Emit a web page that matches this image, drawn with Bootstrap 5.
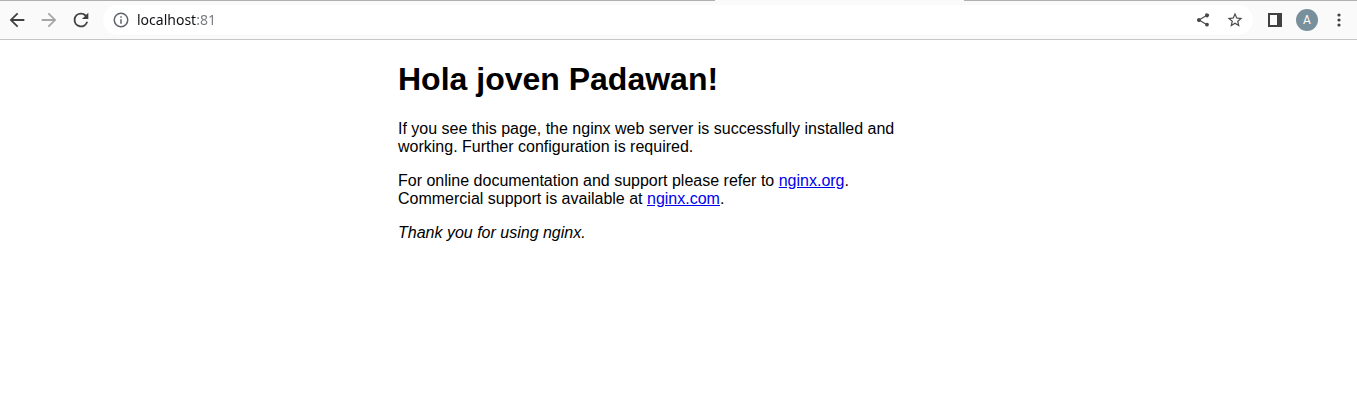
<!DOCTYPE html>
<html lang="en">
<head>
<meta charset="utf-8">
<meta name="viewport" content="width=device-width, initial-scale=1">
<title>localhost:81</title>
<link href="https://cdn.jsdelivr.net/npm/bootstrap@5.3.0/dist/css/bootstrap.min.css" rel="stylesheet">
<style>
  body { font-family: "Liberation Sans", Arial, sans-serif; color: #000; line-height: 18px; }
  .tab-edge { height: 1px; }
  .edge-start { width: 52.7%; background: #b0b0b0; }
  .edge-active { width: 249px; background: #fafafa; }
  .edge-end { background: #b0b0b0; }
  .toolbar { background: #fafafa; border-bottom: 1px solid #c6c6c6; padding: 4px 2px 4px 1px; gap: 6px; }
  .tool { width: 32px; height: 30px; color: #404040; }
  .tool:disabled { color: #a6a6a6; border: 0; opacity: 1; }
  .tool svg { fill: currentColor; }
  .address { background: #fff; height: 30px; padding: 0 2px; }
  .address .tool { color: #5f6368; }
  .address .dark { color: #484848; }
  .url {
    font-family: "Noto Sans", sans-serif; font-size: 14px; line-height: 20px;
    color: #202124; outline: 0;
    background: linear-gradient(90deg, #101114 59px, #75797d 59px);
    -webkit-background-clip: text; background-clip: text;
    -webkit-text-fill-color: transparent;
  }
  .avatar { width: 22px; height: 22px; background: #78909c; color: #fff; font: 400 12px/22px Roboto, sans-serif; }
  .page { max-width: 561px; }
  .page h1 { font-size: 32px; line-height: 37px; margin: 21px 0 22px; }
  .page p { margin-bottom: 16px; }
  .page a { color: #0000ee; }
</style>
</head>
<body>
<header>
  <div class="tab-edge d-flex">
    <div class="edge-start"></div><div class="edge-active"></div><div class="edge-end flex-grow-1"></div>
  </div>
  <nav class="toolbar d-flex align-items-center" aria-label="Browser toolbar">
    <div class="d-flex">
      <button class="tool btn p-0 border-0 d-flex align-items-center justify-content-center" type="button" aria-label="Back">
        <svg width="22" height="22" viewBox="0 0 24 24"><path d="M20 10.9H7.8l5.6-5.5L12 4l-8 8 8 8 1.4-1.4-5.6-5.5H20z"/></svg>
      </button>
      <button class="tool btn p-0 border-0 d-flex align-items-center justify-content-center" type="button" aria-label="Forward" disabled>
        <svg width="22" height="22" viewBox="0 0 24 24"><path d="M4 10.9h12.2l-5.6-5.5L12 4l8 8-8 8-1.4-1.4 5.6-5.5H4z"/></svg>
      </button>
      <button class="tool btn p-0 border-0 d-flex align-items-center justify-content-center" type="button" aria-label="Reload">
        <svg width="22" height="22" viewBox="0 0 24 24"><path d="M17.65 6.35A7.96 7.96 0 0 0 12 4a8 8 0 1 0 7.73 10h-2.08A6 6 0 1 1 12 6c1.66 0 3.14.69 4.22 1.78L13 11h7V4z"/></svg>
      </button>
    </div>
    <div class="address d-flex align-items-center flex-grow-1 rounded-pill">
      <button class="tool btn p-0 border-0 d-flex align-items-center justify-content-center" type="button" aria-label="Site information">
        <svg width="18" height="18" viewBox="0 0 24 24"><path d="M11 7h2v2h-2zm0 4h2v6h-2zm1-9a10 10 0 1 0 0 20 10 10 0 0 0 0-20zm0 18a8 8 0 1 1 0-16 8 8 0 0 1 0 16z"/></svg>
      </button>
      <input class="url flex-grow-1 border-0 p-0" type="text" value="localhost:81" aria-label="Address">
      <button class="tool dark btn p-0 border-0 d-flex align-items-center justify-content-center" type="button" aria-label="Share">
        <svg width="16" height="16" viewBox="0 0 24 24"><path d="M18 16.1c-.8 0-1.4.3-2 .8l-7.100-4.200a3 3 0 0 0 0-1.400l7-4.100A3 3 0 1 0 15 5c0 .2 0 .5.1.7L8 9.800a3 3 0 1 0 0 4.400l7.100 4.200a2.900 2.900 0 1 0 2.900-2.300z"/></svg>
      </button>
      <button class="tool dark btn p-0 border-0 d-flex align-items-center justify-content-center" type="button" aria-label="Bookmark">
        <svg width="18" height="18" viewBox="0 0 24 24"><path d="M22 9.240l-7.190-.62L12 2 9.190 8.630 2 9.240l5.460 4.730L5.820 21 12 17.270 18.180 21l-1.630-7.030zM12 15.400l-3.760 2.270 1-4.280-3.320-2.880 4.380-.38L12 6.100l1.710 4.040 4.380.38-3.320 2.880 1 4.280z"/></svg>
      </button>
    </div>
    <div class="d-flex">
      <button class="tool btn p-0 border-0 d-flex align-items-center justify-content-center" type="button" aria-label="Side panel">
        <svg width="14" height="14" viewBox="0 0 14 14"><path fill-rule="evenodd" d="M0 0h14v14H0zM2 2v10h7V2z"/></svg>
      </button>
      <button class="tool btn p-0 border-0 d-flex align-items-center justify-content-center" type="button" aria-label="Profile">
        <span class="avatar rounded-circle">A</span>
      </button>
      <button class="tool btn p-0 border-0 d-flex align-items-center justify-content-center" type="button" aria-label="Menu">
        <svg width="4" height="14" viewBox="0 0 4 14"><circle cx="2" cy="2" r="1.6"/><circle cx="2" cy="7" r="1.6"/><circle cx="2" cy="12" r="1.6"/></svg>
      </button>
    </div>
  </nav>
</header>
<main class="page mx-auto pe-2">
  <h1 class="fw-bold">Hola joven Padawan!</h1>
  <p>If you see this page, the nginx web server is successfully installed and working. Further configuration is required.</p>
  <p>For online documentation and support please refer to <a href="http://nginx.org/">nginx.org</a>.<br>
  Commercial support is available at <a href="http://nginx.com/">nginx.com</a>.</p>
  <p><em>Thank you for using nginx.</em></p>
</main>
<script src="https://cdn.jsdelivr.net/npm/bootstrap@5.3.0/dist/js/bootstrap.bundle.min.js"></script>
</body>
</html>
